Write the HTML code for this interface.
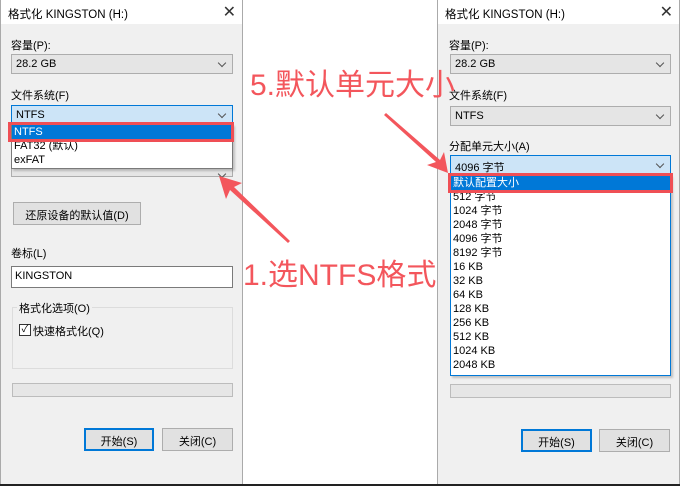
<!DOCTYPE html>
<html><head><meta charset="utf-8"><style>
*{margin:0;padding:0;box-sizing:border-box}
body{width:680px;height:486px;background:#fff;position:relative;overflow:hidden;font-family:"Liberation Sans","Noto Sans CJK SC",sans-serif;font-size:11px;color:#000}
.dlg{position:absolute;top:0;width:243px;height:484px;background:#f0f0f0;border-left:1px solid #aaa;border-right:1px solid #aaa}
.tb{position:absolute;left:0;top:0;right:0;height:24px;background:#fff;font-size:11.5px;padding:6px 0 0 7px}
.x{position:absolute;right:6px;top:2px;font-size:16px;color:#333}
.a{position:absolute}
.cb{position:absolute;height:20px;border:1px solid #adadad;background:#e5e5e5;padding:3px 0 0 4px}
.cb.b{background:#cce4f7;border-color:#0078d7}
.cb::after{content:"";position:absolute;right:7px;top:5px;width:5px;height:5px;border-right:1px solid #555;border-bottom:1px solid #555;transform:rotate(45deg)}
.btn{position:absolute;border:1px solid #adadad;background:#e1e1e1;text-align:center;padding-top:4px}
.btn.p{border:2px solid #0078d7;padding-top:3px}
.list{position:absolute;background:#fff;border:1px solid #646464;box-shadow:2px 2px 2px rgba(0,0,0,.2)}
.list div{height:14px;line-height:14px;padding-left:2px}
.sel{background:#0078d7;color:#fff}
.red{position:absolute;border:3px solid #ef4f55}
.prog{position:absolute;height:14px;border:1px solid #bcbcbc;background:#e6e6e6}
.big{position:absolute;color:#f3565c;font-size:30px;white-space:nowrap}
</style></head><body>
<div class="dlg" style="left:0">
 <div class="tb">格式化 KINGSTON (H:)<span class="x">✕</span></div>
 <div class="a" style="left:10px;top:37px">容量(P):</div>
 <div class="cb" style="left:10px;top:54px;width:222px">28.2 GB</div>
 <div class="a" style="left:10px;top:87px">文件系统(F)</div>
 <div class="cb" style="left:10px;top:165px;width:222px;height:12px"></div>
 <div class="cb b" style="left:10px;top:105px;width:222px">NTFS</div>
 <div class="list" style="left:10px;top:124px;width:222px;height:45px;border-color:#7a7a7a">
  <div class="sel">NTFS</div><div>FAT32 (默认)</div><div>exFAT</div></div>
 <div class="red" style="left:7px;top:122px;width:226px;height:20px"></div>
 <div class="btn" style="left:12px;top:202px;width:128px;height:23px">还原设备的默认值(D)</div>
 <div class="a" style="left:10px;top:245px">卷标(L)</div>
 <div class="a" style="left:10px;top:266px;width:222px;height:22px;background:#fff;border:1px solid #7a7a7a;padding:3px 0 0 3px">KINGSTON</div>
 <div class="a" style="left:11px;top:307px;width:221px;height:62px;border:1px solid #dcdcdc"></div>
 <div class="a" style="left:16px;top:300px;background:#f0f0f0;padding:0 2px">格式化选项(O)</div>
 <div class="a" style="left:18px;top:324px;width:12px;height:12px;border:1px solid #333;background:#fff;font-size:10px;line-height:10px;text-align:center">✓</div>
 <div class="a" style="left:32px;top:323px">快速格式化(Q)</div>
 <div class="prog" style="left:11px;top:383px;width:221px"></div>
 <div class="btn p" style="left:83px;top:428px;width:70px;height:23px">开始(S)</div>
 <div class="btn" style="left:161px;top:428px;width:71px;height:23px">关闭(C)</div>
</div>
<div class="dlg" style="left:437px">
 <div class="tb">格式化 KINGSTON (H:)<span class="x">✕</span></div>
 <div class="a" style="left:11px;top:37px">容量(P):</div>
 <div class="cb" style="left:12px;top:54px;width:221px">28.2 GB</div>
 <div class="a" style="left:11px;top:87px">文件系统(F)</div>
 <div class="cb" style="left:12px;top:106px;width:221px">NTFS</div>
 <div class="a" style="left:11px;top:138px">分配单元大小(A)</div>
 <div class="cb b" style="left:12px;top:155px;width:221px">4096 字节</div>
 <div class="list" style="left:12px;top:175px;width:221px;height:201px;border-color:#0078d7">
  <div class="sel">默认配置大小</div><div>512 字节</div><div>1024 字节</div><div>2048 字节</div><div>4096 字节</div><div>8192 字节</div><div>16 KB</div><div>32 KB</div><div>64 KB</div><div>128 KB</div><div>256 KB</div><div>512 KB</div><div>1024 KB</div><div>2048 KB</div></div>
 <div class="red" style="left:10px;top:173px;width:225px;height:20px"></div>
 <div class="prog" style="left:12px;top:384px;width:221px"></div>
 <div class="btn p" style="left:83px;top:429px;width:71px;height:23px">开始(S)</div>
 <div class="btn" style="left:161px;top:429px;width:71px;height:23px">关闭(C)</div>
</div>
<div class="a" style="left:0;top:484px;width:680px;height:2px;background:#222"></div>
<div class="big" style="left:250px;top:60px">5.默认单元大小</div>
<div class="big" style="left:243px;top:250px">1.选NTFS格式</div>
<svg class="a" style="left:0;top:0" width="680" height="486">
 <g fill="#f3565c">
  <polygon points="290,241 288,243 230,190 226,199 219,176 242,183 234,187"/>
  <polygon points="384,115 386,113 440,160 444,152 448,173 427,165 436,162"/>
 </g>
</svg>
</body></html>
